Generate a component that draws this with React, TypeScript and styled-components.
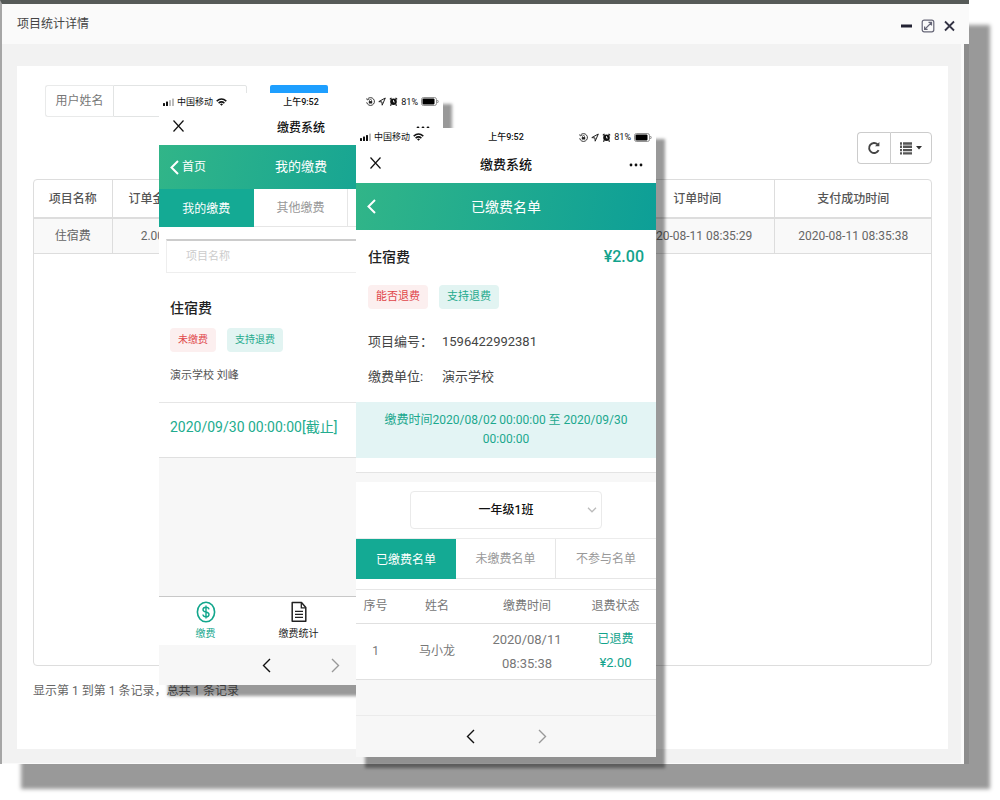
import React from "react";
import styled, { createGlobalStyle, css } from "styled-components";

const GlobalStyle = createGlobalStyle`
  *, *::before, *::after { box-sizing: border-box; }
  body {
    margin: 0;
    background: #fff;
    font-family: Roboto, "Noto Sans CJK SC", sans-serif;
    font-size: 12px;
    line-height: 16px;
    color: #555;
  }
  button, input, select { font: inherit; color: inherit; margin: 0; }
  button { border: 0; padding: 0; background: none; cursor: pointer; }
  h1, h2, h3, p, dl, dd, dt { margin: 0; font-weight: inherit; font-size: inherit; }
  svg { display: block; flex: none; }
`;

const Stage = styled.main`
  position: relative;
  padding: 0 31px 36px 0;
`;

/* ---------- desktop window ---------- */

const Window = styled.section`
  border-top: 4px solid #565a58;
  border-left: 2px solid #a6a6a6;
  background: #f2f2f2;
  box-shadow: 21px 25px 4px #999;
`;

const TitleBar = styled.header`
  display: flex;
  align-items: center;
  justify-content: space-between;
  height: 40px;
  padding: 0 13px 0 15px;
  background: #fafafa;
  color: #444;
`;

const WindowControls = styled.div`
  display: flex;
  gap: 8px;
  padding-top: 4px;
  color: #333;
`;

const WindowBody = styled.div`
  padding: 22px 16px 15px 15px;
  border-right: 5px solid #8c8c8c;
  background: #f2f2f2;
  box-shadow: inset -3px -1px 0 #fafafa;
`;

const Panel = styled.div`
  padding: 19px 16px 50px;
  background: #fff;
`;

const SearchRow = styled.form`
  display: flex;
  margin-left: 12px;
  height: 32px;
`;

const SearchLabel = styled.label`
  width: 68px;
  padding: 7px 0;
  text-align: center;
  color: #777;
  border: 1px solid #e9eaea;
  border-right: 0;
  border-radius: 3px 0 0 3px;
`;

const SearchInput = styled.input`
  width: 134px;
  padding: 0 10px;
  border: 1px solid #e2e4e4;
  border-radius: 0 2px 2px 0;
  background: #fff;
`;

const SearchButton = styled.button`
  width: 58px;
  margin-left: 23px;
  border-radius: 2px;
  background: #1e9fff;
  color: #fff;
`;

const ToolRow = styled.div`
  display: flex;
  justify-content: flex-end;
  margin: 15px 0;
`;

const ToolButton = styled.button<{ $wide?: boolean }>`
  display: flex;
  align-items: center;
  justify-content: center;
  gap: 4px;
  width: ${(p) => (p.$wide ? 42 : 33)}px;
  height: 32px;
  border: 1px solid #ccc;
  color: #444;
  &:first-child { border-radius: 4px 0 0 4px; border-right: 0; }
  &:last-child { border-radius: 0 4px 4px 0; }
`;

const TableFrame = styled.div`
  min-height: 487px;
  border: 1px solid #ddd;
  border-radius: 4px;
`;

const RecordTable = styled.table`
  width: 100%;
  table-layout: fixed;
  border-collapse: collapse;
  text-align: center;
  color: #666;
  th, td { padding: 0; overflow: hidden; white-space: nowrap; border-left: 1px solid #ddd; }
  th:first-child, td:first-child { border-left: 0; }
  th { height: 38px; font-weight: 500; color: #555; border-bottom: 2px solid #ddd; }
  td { height: 35px; background: #f9f9f9; border-bottom: 1px solid #ddd; }
`;

const Summary = styled.p`
  padding-top: 17px;
  color: #666;
`;

/* ---------- phones ---------- */

const Phone = styled.section<{ $x: number; $y: number; $w: number }>`
  position: absolute;
  left: ${(p) => p.$x}px;
  top: ${(p) => p.$y}px;
  width: ${(p) => p.$w}px;
  background: #f7f7f7;
  box-shadow: 9px 11px 3px rgba(0, 0, 0, 0.4);
`;

const StatusBar = styled.div<{ $tall?: boolean }>`
  display: grid;
  grid-template-columns: 1fr auto 1fr;
  align-items: center;
  height: ${(p) => (p.$tall ? 18 : 17)}px;
  padding: 0 4px;
  background: #fff;
  color: #111;
  font-size: 9px;
  line-height: 12px;
  font-weight: 500;
`;

const StatusSide = styled.div<{ $end?: boolean }>`
  display: flex;
  align-items: center;
  gap: 3px;
  justify-content: ${(p) => (p.$end ? "flex-end" : "flex-start")};
  font-weight: 400;
`;

const TopNav = styled.div<{ $tall?: boolean }>`
  display: grid;
  grid-template-columns: 1fr auto 1fr;
  align-items: center;
  height: ${(p) => (p.$tall ? 37 : 35)}px;
  padding: 0 13px;
  background: #fff;
  color: #111;
  font-weight: 500;
  font-size: ${(p) => (p.$tall ? 13 : 12)}px;
`;

const EndButton = styled.button`
  justify-self: end;
`;

const AppBar = styled.header<{ $tall?: boolean }>`
  display: grid;
  grid-template-columns: 1fr auto 1fr;
  align-items: center;
  height: ${(p) => (p.$tall ? 47 : 44)}px;
  padding: 0 11px;
  background: linear-gradient(100deg, #31b588, #0d9f97);
  color: #fff;
  font-size: ${(p) => (p.$tall ? 14 : 13)}px;
`;

const BackLink = styled.button`
  display: flex;
  align-items: center;
  gap: 3px;
  justify-self: start;
  font-size: 12px;
`;

const Tabs = styled.nav<{ $tall?: boolean }>`
  display: grid;
  grid-template-columns: repeat(3, 1fr);
  height: ${(p) => (p.$tall ? 41 : 38)}px;
  border-bottom: 1px solid #e6e6e6;
  ${(p) => p.$tall && css`border-top: 1px solid #ececec;`}
  background: #fff;
`;

const Tab = styled.button<{ $active?: boolean }>`
  padding-top: 1px;
  border-right: 1px solid #e6e6e6;
  color: #999;
  &:nth-child(3) { border-right: 0; }
  ${(p) => p.$active && css`
    margin-bottom: -1px;
    background: #14aa94;
    color: #fff;
    border-right: 0;
  `}
`;

const FilterArea = styled.div`
  padding: 12px 7px 0;
  background: #fff;
`;

const FilterInput = styled.input`
  display: block;
  width: 100%;
  height: 34px;
  padding: 0 19px;
  border: 1px solid #eee;
  border-top: 2px solid #ccc;
  background: #fff;
  font-size: 11px;
  &::placeholder { color: #ccc; opacity: 1; }
`;

const FeeCard = styled.article`
  padding: 25px 11px 18px;
  background: #fff;
  border-bottom: 1px solid #e6e6e6;
`;

const FeeHead = styled.div`
  display: flex;
  justify-content: space-between;
  align-items: center;
  line-height: 20px;
`;

const FeeName = styled.h2`
  font-size: 14px;
  font-weight: 500;
  color: #222;
`;

const FeeAmount = styled.span`
  font-size: 16px;
  font-weight: 500;
  color: #12a38c;
`;

const TagRow = styled.div`
  display: flex;
  gap: 11px;
`;

const Tag = styled.span<{ $tone: "red" | "green"; $small?: boolean }>`
  padding: 4px 8px;
  border-radius: 4px;
  font-size: ${(p) => (p.$small ? 10 : 11)}px;
  background: ${(p) => (p.$tone === "red" ? "#fcefef" : "#e2f4f2")};
  color: ${(p) => (p.$tone === "red" ? "#e0464a" : "#1faa8d")};
`;

const FeeOwner = styled.p`
  margin-top: 16px;
  font-size: 11px;
  color: #555;
`;

const Deadline = styled.p`
  padding: 14px 11px 20px;
  border-bottom: 1px solid #e0e0e0;
  background: #fff;
  color: #22ac8e;
  font-size: 14px;
  line-height: 20px;
`;

const Blank = styled.div<{ $h: number }>`
  height: ${(p) => p.$h}px;
`;

const TabBar = styled.nav`
  display: grid;
  grid-template-columns: repeat(3, 1fr);
  height: 49px;
  padding-right: 5px;
  border-top: 1px solid #c8c8c8;
  background: #fff;
`;

const TabBarItem = styled.a<{ $active?: boolean }>`
  display: flex;
  flex-direction: column;
  align-items: center;
  gap: 3px;
  padding-top: 4px;
  font-size: 10px;
  line-height: 16px;
  text-decoration: none;
  color: ${(p) => (p.$active ? "#12a68c" : "#222")};
`;

const BrowserBar = styled.div<{ $tall?: boolean }>`
  display: flex;
  align-items: center;
  justify-content: center;
  gap: ${(p) => (p.$tall ? 63 : 60)}px;
  height: ${(p) => (p.$tall ? 42 : 40)}px;
  ${(p) => p.$tall && css`border-top: 1px solid #ebebeb;`}
`;

const Detail = styled.div`
  padding: 17px 12px 15px;
  background: #fff;
  ${TagRow} { margin: 18px 0 23px; }
`;

const Facts = styled.dl`
  display: grid;
  grid-template-columns: 74px 1fr;
  row-gap: 15px;
  font-size: 13px;
  line-height: 20px;
  color: #444;
`;

const PayPeriod = styled.p`
  padding: 9px 24px;
  background: #e3f4f4;
  color: #1ba88e;
  text-align: center;
  line-height: 19px;
`;

const Gap = styled.div`
  height: 24px;
  border-top: 14px solid #fff;
  box-shadow: inset 0 1px 0 #e4e4e4;
`;

const ClassRow = styled.div`
  display: flex;
  justify-content: center;
  padding: 9px 0;
  background: #fff;
`;

const SelectBox = styled.div`
  display: grid;
  width: 192px;
  align-items: center;
  svg { grid-area: 1 / 1; justify-self: end; margin-right: 5px; pointer-events: none; }
`;

const ClassSelect = styled.select`
  grid-area: 1 / 1;
  appearance: none;
  width: 100%;
  height: 38px;
  padding: 0 16px;
  border: 1px solid #eaeaea;
  border-radius: 4px;
  background: #fff;
  color: #111;
  font-weight: 500;
  text-align: center;
  text-align-last: center;
`;

const PayTableWrap = styled.div`
  padding-top: 10px;
  background: #fff;
`;

const PayTable = styled.table`
  width: 100%;
  table-layout: fixed;
  border-collapse: collapse;
  text-align: center;
  line-height: 23px;
  color: #777;
  th, td { padding: 0; font-weight: 400; border-top: 1px solid #e6e6e6; border-bottom: 1px solid #e0e0e0; }
  th { height: 34px; }
  td { height: 56px; }
`;

const Num = styled.span<{ $green?: boolean }>`
  font-size: 13px;
  color: ${(p) => (p.$green ? "#12a38c" : "inherit")};
`;

const Green = styled.span`
  color: #12a38c;
`;

/* ---------- drawings ---------- */

const Signal = ({ bars }: { bars: number }) => (
  <svg width="11" height="8" viewBox="0 0 11 8">
    {[0, 1, 2, 3].map((i) => (
      <rect key={i} x={i * 3} y={5 - i * 1.5} width="2" height={3 + i * 1.5} rx=".5" fill={i < bars ? "#111" : "#bbb"} />
    ))}
  </svg>
);

const Wifi = () => (
  <svg width="11" height="8" viewBox="0 0 11 8" fill="none" stroke="#111" strokeWidth="1.5">
    <path d="M.7 3.1Q5.5-1.2 10.3 3.1M2.6 5.1Q5.5 2.6 8.4 5.1" />
    <path d="M5.5 7.8 4 6.2Q5.5 5 7 6.2Z" fill="#111" stroke="none" />
  </svg>
);

const StatusIcons = () => (
  <>
    <svg width="9" height="9" viewBox="0 0 9 9" fill="none" stroke="#222">
      <path d="M1.4 2.2A3.9 3.9 0 1 1 .7 5.3" strokeWidth=".9" />
      <path d="M.4 1.4 1.3 3 3 2.2" strokeWidth=".7" />
      <rect x="2.8" y="4.1" width="3.4" height="2.4" fill="#222" stroke="none" />
      <path d="M3.5 4.2V3.4a1 1 0 0 1 2 0v.8" strokeWidth=".7" />
    </svg>
    <svg width="8" height="9" viewBox="0 0 8 9" fill="none" stroke="#222" strokeWidth="1" strokeLinejoin="round">
      <path d="M7.3 1 .8 4.6 3.9 4.9 4.2 8.2Z" />
    </svg>
    <svg width="9" height="9" viewBox="0 0 9 9">
      <circle cx="4.5" cy="4.8" r="3.3" fill="#111" />
      <path d="M.9 2.4 2.5.9M8.1 2.4 6.5.9M2.3 7.4 1.4 8.6M6.7 7.4l.9 1.2" stroke="#111" strokeWidth="1.3" />
      <path d="M4.5 3v2h1.4" stroke="#fff" strokeWidth=".8" fill="none" />
    </svg>
  </>
);

const Battery = () => (
  <svg width="18" height="9" viewBox="0 0 18 9">
    <rect x=".5" y=".5" width="15" height="8" rx="2" fill="none" stroke="#777" strokeWidth=".8" />
    <rect x="1.5" y="1.5" width="12" height="6" rx="1" fill="#000" />
    <path d="M16.500 3q1.400 1.500 0 3" fill="none" stroke="#777" strokeWidth=".9" />
  </svg>
);

const CloseIcon = () => (
  <svg width="13" height="14" viewBox="0 0 13 14" stroke="#111" strokeWidth="1.2">
    <path d="M1.500 1.500l10 11M11.500 1.500l-10 11" />
  </svg>
);

const Dots = () => (
  <svg width="14" height="4" viewBox="0 0 14 4" fill="#111">
    <circle cx="2" cy="2" r="1.4" />
    <circle cx="7" cy="2" r="1.4" />
    <circle cx="12" cy="2" r="1.4" />
  </svg>
);

const Chevron = ({ dir, color, weight = 1.4 }: { dir: "left" | "right"; color: string; weight?: number }) => (
  <svg width="9" height="15" viewBox="0 0 9 15" fill="none" stroke={color} strokeWidth={weight}>
    <path d={dir === "left" ? "M8 1 1.5 7.5 8 14" : "M1 1l6.5 6.5L1 14"} />
  </svg>
);

const PhoneStatus = ({ bars, tall }: { bars: number; tall?: boolean }) => (
  <StatusBar $tall={tall}>
    <StatusSide>
      <Signal bars={bars} />
      中国移动
      <Wifi />
    </StatusSide>
    <span>上午9:52</span>
    <StatusSide $end>
      <StatusIcons />
      81%
      <Battery />
    </StatusSide>
  </StatusBar>
);

const PhoneNav = ({ tall }: { tall?: boolean }) => (
  <TopNav $tall={tall}>
    <div>
      <button aria-label="关闭">
        <CloseIcon />
      </button>
    </div>
    <h1>缴费系统</h1>
    <EndButton aria-label="更多">
      <Dots />
    </EndButton>
  </TopNav>
);

const PhoneBrowserBar = ({ tall }: { tall?: boolean }) => (
  <BrowserBar $tall={tall}>
    <button aria-label="后退">
      <Chevron dir="left" color="#111" />
    </button>
    <button aria-label="前进">
      <Chevron dir="right" color="#999" />
    </button>
  </BrowserBar>
);

/* ---------- screens ---------- */

const DesktopWindow = () => (
  <Window>
    <TitleBar>
      <h2>项目统计详情</h2>
      <WindowControls>
        <button aria-label="最小化">
          <svg width="13" height="14" viewBox="0 0 13 14"><path d="M1 7h11" stroke="#223" strokeWidth="3" /></svg>
        </button>
        <button aria-label="最大化">
          <svg width="14" height="14" viewBox="0 0 14 14" fill="none" stroke="#667" strokeWidth="1.2">
            <rect x="1.2" y="1.2" width="11.6" height="11.6" rx="2" />
            <path d="M4.200 9.800 10 4M7.500 3.400h3v3.200M3.600 7.400v3h3" />
          </svg>
        </button>
        <button aria-label="关闭窗口">
          <svg width="13" height="14" viewBox="0 0 13 14"><path d="M2 2.500l9 9M11 2.500l-9 9" stroke="#334" strokeWidth="1.8" /></svg>
        </button>
      </WindowControls>
    </TitleBar>
    <WindowBody>
      <Panel>
        <SearchRow onSubmit={(e) => e.preventDefault()}>
          <SearchLabel htmlFor="user-name">用户姓名</SearchLabel>
          <SearchInput id="user-name" />
          <SearchButton aria-label="查询" />
        </SearchRow>
        <ToolRow>
          <ToolButton aria-label="刷新">
            <svg width="14" height="14" viewBox="0 0 14 14" fill="none" stroke="#444" strokeWidth="1.9">
              <path d="M11.600 9.200A5 5 0 1 1 10.600 3.400" />
              <path d="M12.400.900v4.400H8Z" fill="#444" stroke="none" />
            </svg>
          </ToolButton>
          <ToolButton $wide aria-label="列">
            <svg width="12" height="13" viewBox="0 0 12 13" stroke="#555" strokeWidth="2.4">
              <path d="M0 1.500h2M3 1.500h9M0 4.800h2M3 4.800h9M0 8.100h2M3 8.100h9M0 11.400h2M3 11.400h9" />
            </svg>
            <svg width="6" height="4" viewBox="0 0 6 4"><path d="M0 0h6L3 3.600Z" fill="#333" /></svg>
          </ToolButton>
        </ToolRow>
        <TableFrame>
          <RecordTable>
            <colgroup>
              <col style={{ width: "8.7%" }} />
              <col style={{ width: "9%" }} />
              <col />
              <col style={{ width: "17.3%" }} />
              <col style={{ width: "17.4%" }} />
            </colgroup>
            <thead>
              <tr>
                <th>项目名称</th>
                <th>订单金额</th>
                <th />
                <th>订单时间</th>
                <th>支付成功时间</th>
              </tr>
            </thead>
            <tbody>
              <tr>
                <td>住宿费</td>
                <td>2.00</td>
                <td />
                <td>2020-08-11 08:35:29</td>
                <td>2020-08-11 08:35:38</td>
              </tr>
            </tbody>
          </RecordTable>
        </TableFrame>
        <Summary>显示第 1 到第 1 条记录，总共 1 条记录</Summary>
      </Panel>
    </WindowBody>
  </Window>
);

const MyPayments = () => (
  <Phone $x={159} $y={93} $w={284}>
    <PhoneStatus bars={2} />
    <PhoneNav />
    <AppBar>
      <BackLink>
        <Chevron dir="left" color="#fff" weight={2} />
        首页
      </BackLink>
      <h2>我的缴费</h2>
    </AppBar>
    <Tabs>
      <Tab $active>我的缴费</Tab>
      <Tab>其他缴费</Tab>
    </Tabs>
    <FilterArea>
      <FilterInput placeholder="项目名称" aria-label="项目名称" />
    </FilterArea>
    <FeeCard>
      <FeeHead>
        <FeeName>住宿费</FeeName>
      </FeeHead>
      <Blank $h={10} />
      <TagRow>
        <Tag $small $tone="red">未缴费</Tag>
        <Tag $small $tone="green">支持退费</Tag>
      </TagRow>
      <FeeOwner>演示学校 刘峰</FeeOwner>
    </FeeCard>
    <Deadline>2020/09/30 00:00:00[截止]</Deadline>
    <Blank $h={138} />
    <TabBar>
      <TabBarItem href="#pay" $active>
        <svg width="20" height="22" viewBox="0 0 20 22" fill="none" stroke="#12a68c" strokeWidth="1.6">
          <ellipse cx="10" cy="11" rx="8.6" ry="9.8" />
          <path d="M13 8.300C12.700 6.800 11.500 6.300 10 6.300 8.200 6.300 7 7.200 7 8.700 7 12 13 10 13 13.400 13 15 11.700 15.800 10 15.800 8.200 15.800 7.100 15 6.900 13.500M10 4.600V17.400" strokeWidth="1.4" />
        </svg>
        缴费
      </TabBarItem>
      <TabBarItem href="#stats">
        <svg width="16" height="22" viewBox="0 0 16 22" fill="none" stroke="#222" strokeWidth="1.5">
          <path d="M1.200 1.500H10.500L14.800 6.500V20.300H1.200Z" strokeLinejoin="round" />
          <path d="M10.300 1.800V6.800H14.500M4 10.300H12M4 13.300H12M4 16.300H12" strokeWidth="1.3" />
        </svg>
        缴费统计
      </TabBarItem>
    </TabBar>
    <PhoneBrowserBar />
  </Phone>
);

const PaidList = () => (
  <Phone $x={356} $y={128} $w={300}>
    <PhoneStatus bars={3} tall />
    <PhoneNav tall />
    <AppBar $tall>
      <BackLink aria-label="返回">
        <Chevron dir="left" color="#fff" weight={2} />
      </BackLink>
      <h2>已缴费名单</h2>
    </AppBar>
    <Detail>
      <FeeHead>
        <FeeName>住宿费</FeeName>
        <FeeAmount>¥2.00</FeeAmount>
      </FeeHead>
      <TagRow>
        <Tag $tone="red">能否退费</Tag>
        <Tag $tone="green">支持退费</Tag>
      </TagRow>
      <Facts>
        <dt>项目编号：</dt>
        <dd>1596422992381</dd>
        <dt>缴费单位:</dt>
        <dd>演示学校</dd>
      </Facts>
    </Detail>
    <PayPeriod>缴费时间2020/08/02 00:00:00 至 2020/09/30 00:00:00</PayPeriod>
    <Gap />
    <ClassRow>
      <SelectBox>
        <ClassSelect aria-label="班级">
          <option>一年级1班</option>
        </ClassSelect>
        <svg width="10" height="6" viewBox="0 0 10 6" fill="none" stroke="#bbb" strokeWidth="1.3"><path d="M1 .8l4 4 4-4" /></svg>
      </SelectBox>
    </ClassRow>
    <Tabs $tall>
      <Tab $active>已缴费名单</Tab>
      <Tab>未缴费名单</Tab>
      <Tab>不参与名单</Tab>
    </Tabs>
    <PayTableWrap>
      <PayTable>
        <colgroup>
          <col style={{ width: "13%" }} />
          <col style={{ width: "28%" }} />
          <col style={{ width: "32%" }} />
          <col style={{ width: "27%" }} />
        </colgroup>
        <thead>
          <tr>
            <th>序号</th>
            <th>姓名</th>
            <th>缴费时间</th>
            <th>退费状态</th>
          </tr>
        </thead>
        <tbody>
          <tr>
            <td>1</td>
            <td>马小龙</td>
            <td>
              <Num>2020/08/11<br />08:35:38</Num>
            </td>
            <td>
              <Green>已退费</Green>
              <br />
              <Num $green>¥2.00</Num>
            </td>
          </tr>
        </tbody>
      </PayTable>
    </PayTableWrap>
    <Blank $h={35} />
    <PhoneBrowserBar tall />
  </Phone>
);

export default function App() {
  return (
    <>
      <GlobalStyle />
      <Stage>
        <DesktopWindow />
        <MyPayments />
        <PaidList />
      </Stage>
    </>
  );
}
